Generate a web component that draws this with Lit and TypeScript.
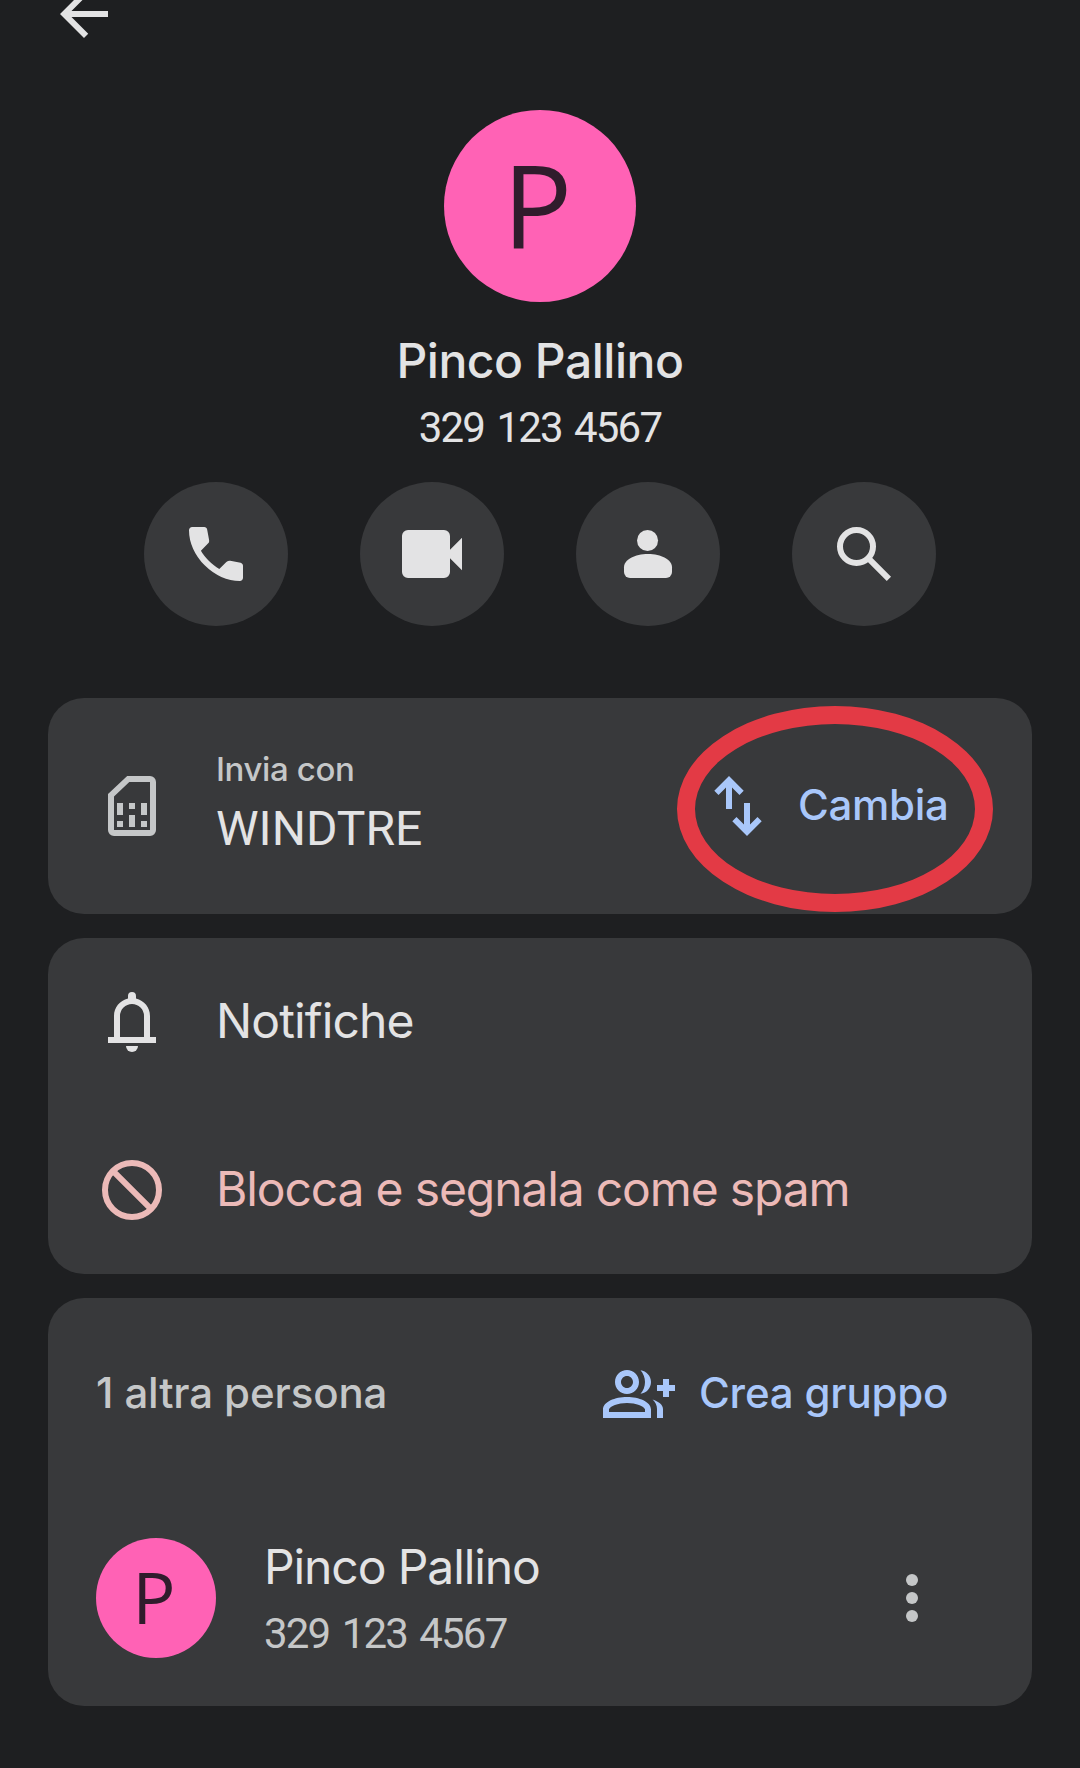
import { LitElement, html, css, svg } from "lit";
import { customElement, property } from "lit/decorators.js";

const icons = {
  back: svg`<path d="M20 11H7.83l5.59-5.59L12 4l-8 8 8 8 1.41-1.41L7.83 13H20z"/>`,
  call: svg`<path d="M19.95 21q-3.125 0-6.175-1.362-3.05-1.363-5.55-3.863-2.5-2.5-3.863-5.55Q3 7.175 3 4.05q0-.45.3-.75t.75-.3H8.1q.35 0 .625.237.275.238.325.563l.65 3.5q.05.4-.025.675-.075.275-.275.475L6.975 10.9q.5.925 1.187 1.787.688.863 1.513 1.663.775.775 1.625 1.438.85.662 1.8 1.212l2.35-2.35q.225-.225.588-.338.362-.112.712-.062l3.45.7q.35.1.575.363.225.262.225.587v4.05q0 .45-.3.75t-.75.3z"/>`,
  video: svg`<path d="M4 4h12a2 2 0 0 1 2 2v4.6l4-4v10.8l-4-4V18a2 2 0 0 1-2 2H4a2 2 0 0 1-2-2V6a2 2 0 0 1 2-2z"/>`,
  person: svg`<circle cx="11.85" cy="7.5" r="3.5"/><path d="M4 16.4C4 13.9 7.6 12 12 12s8 1.9 8 4.4V18a2 2 0 0 1-2 2H6a2 2 0 0 1-2-2z"/>`,
  search: svg`<path fill="none" stroke="currentColor" stroke-width="2" d="M15 9.5a5.5 5.5 0 1 1-11 0 5.5 5.5 0 0 1 11 0zM13.4 13.4l6.9 6.9"/>`,
  sim: svg`<path fill-rule="evenodd" d="M10.4 2H18a2 2 0 0 1 2 2v16a2 2 0 0 1-2 2H6a2 2 0 0 1-2-2V8zM11.1 4 6 8.8V20h12V4z"/><path d="M7 11h2v4H7zM7 17h2v2H7zM11 11h2v2h-2zM11 15h2v4h-2zM15 11h2v4h-2zM15 17h2v2h-2z"/>`,
  swap: svg`<path d="m9 2 4.9 4.9-1.4 1.4L10 5.8V13H8V5.8L5.5 8.3 4.1 6.9zM15 22l-4.9-4.9 1.4-1.4 2.5 2.5V11h2v7.2l2.5-2.5 1.4 1.4z"/>`,
  bell: svg`<path fill-rule="evenodd" d="M4 19v-2h2v-7c0-2.8 1.9-5.1 4.67-5.8v-.87a1.33 1.33 0 0 1 2.66 0v.87C16.1 4.9 18 7.2 18 10v7h2v2zM8 17h8v-7a4 4 0 0 0-8 0z"/><path d="M10 20h4a2 2 0 0 1-4 0z"/>`,
  block: svg`<path fill="none" stroke="currentColor" stroke-width="2" d="M21 12a9 9 0 1 1-18 0 9 9 0 0 1 18 0zM5.7 5.7l12.6 12.6"/>`,
  groupAdd: svg`<path d="M22 9V7h-2v2h-2v2h2v2h2v-2h2V9zM8 12c2.21 0 4-1.79 4-4s-1.79-4-4-4-4 1.79-4 4 1.79 4 4 4zm0-6c1.1 0 2 .9 2 2s-.9 2-2 2-2-.9-2-2 .9-2 2-2zM8 13c-4 0-8 1.6-8 4.2V20h16v-2.8C16 14.6 12 13 8 13zm6 5H2v-.9C2.3 16.1 5 15 8 15s5.7 1.1 6 2.1zM12.51 4.05C13.43 5.11 14 6.49 14 8s-.57 2.89-1.49 3.95C14.47 11.7 16 10.04 16 8s-1.53-3.7-3.49-3.95zM16.53 13.83C17.42 14.66 18 15.7 18 17v3h2v-3c0-1.45-1.59-2.51-3.47-3.17z"/>`,
  more: svg`<circle cx="12" cy="6" r="2"/><circle cx="12" cy="12" r="2"/><circle cx="12" cy="18" r="2"/>`,
};

@customElement("ui-icon")
class UiIcon extends LitElement {
  static styles = css`
    :host { display: block; flex: none; width: 72px; height: 72px; }
    svg { display: block; width: 72px; height: 72px; fill: currentColor; }
  `;
  @property() name: keyof typeof icons = "back";
  render() {
    return html`<svg viewBox="0 0 24 24" aria-hidden="true">${icons[this.name]}</svg>`;
  }
}

@customElement("app-root")
class AppRoot extends LitElement {
  static styles = css`
    :host {
      display: block;
      height: 1768px;
      overflow: hidden;
      background: #1e1f21;
      color: #e3e3e4;
      font-family: Inter, "Liberation Sans", sans-serif;
      white-space: nowrap;
    }
    * { box-sizing: border-box; }
    .toolbar { display: flex; align-items: flex-start; height: 110px; padding-left: 48px; }
    .back { margin-top: -22px; }
    .profile { display: flex; flex-direction: column; align-items: center; height: 372px; }
    .avatar {
      display: flex; align-items: center; justify-content: center; flex: none;
      border-radius: 50%; background: #ff62b5; color: #301c2c;
      font-family: "Open Sans", sans-serif; line-height: 1;
    }
    .avatar.large { width: 192px; height: 192px; font-size: 116px; padding: 0 5px 6px 0; }
    .avatar.small { width: 120px; height: 120px; font-size: 72px; padding: 0 4px 4px 0; }
    .name { margin-top: 29px; font-size: 48px; line-height: 60px; font-weight: 500; letter-spacing: -0.48px; }
    .phone {
      font-family: Roboto, sans-serif; font-size: 42px; line-height: 50px;
      letter-spacing: -1.8px; word-spacing: 3.6px;
    }
    .profile .phone { margin-top: 12px; }
    .actions { display: flex; justify-content: center; gap: 72px; height: 216px; }
    .round {
      display: flex; align-items: center; justify-content: center;
      width: 144px; height: 144px; border-radius: 50%; background: #38393b;
    }
    .cards { display: flex; flex-direction: column; gap: 24px; padding: 0 48px; }
    .card { position: relative; border-radius: 36px; background: #38393b; }
    .row { display: flex; align-items: center; gap: 48px; padding-left: 48px; }
    .sim { height: 216px; padding-right: 84px; color: #c5c7c8; }
    .send { display: flex; flex-direction: column; padding-bottom: 2px; }
    .caption { font-size: 33px; line-height: 48px; font-weight: 500; letter-spacing: -0.39px; }
    .carrier { font-family: Roboto, sans-serif; font-size: 48px; line-height: 72px; color: #e3e3e4; }
    .action {
      display: flex; align-items: center; gap: 24px; margin-left: auto;
      color: #a9c7fa; font-size: 42px; font-weight: 500; line-height: 52px;
    }
    .action.change { width: 246px; letter-spacing: -0.3px; }
    .action.group { width: 345px; letter-spacing: -0.18px; }
    .action span, .count, .label { padding-bottom: 3px; }
    .ring {
      position: absolute; left: 629px; top: 8px; width: 316px; height: 206px;
      border: 18px solid #e33a45; border-radius: 50%;
    }
    .item { height: 168px; font-size: 48px; line-height: 60px; }
    .notify .label { letter-spacing: -0.88px; }
    .block { color: #ecbab8; }
    .block .label { letter-spacing: -1.14px; }
    .people { height: 408px; }
    .head { display: flex; align-items: center; height: 192px; padding: 0 84px 0 48px; }
    .count { color: #c5c7c8; font-size: 42px; line-height: 52px; font-weight: 500; letter-spacing: -0.12px; }
    .member { gap: 48px; height: 216px; padding-right: 84px; }
    .who { display: flex; flex-direction: column; gap: 12px; padding-bottom: 1px; }
    .who .title { font-size: 48px; line-height: 60px; letter-spacing: -1.1px; }
    .who .phone { color: #c5c7c8; }
    .more { margin-left: auto; color: #c5c7c8; }
  `;

  render() {
    const actions = ["call", "video", "person", "search"];
    return html`
      <header class="toolbar"><ui-icon class="back" name="back"></ui-icon></header>
      <section class="profile">
        <div class="avatar large">P</div>
        <div class="name">Pinco Pallino</div>
        <div class="phone">329 123 4567</div>
      </section>
      <nav class="actions">
        ${actions.map((name) => html`<div class="round"><ui-icon name=${name}></ui-icon></div>`)}
      </nav>
      <main class="cards">
        <section class="card row sim">
          <ui-icon name="sim"></ui-icon>
          <div class="send">
            <span class="caption">Invia con</span>
            <span class="carrier">WINDTRE</span>
          </div>
          <div class="action change"><ui-icon name="swap"></ui-icon><span>Cambia</span></div>
          <div class="ring"></div>
        </section>
        <section class="card">
          <div class="row item notify"><ui-icon name="bell"></ui-icon><span class="label">Notifiche</span></div>
          <div class="row item block"><ui-icon name="block"></ui-icon><span class="label">Blocca e segnala come spam</span></div>
        </section>
        <section class="card people">
          <div class="head">
            <span class="count">1 altra persona</span>
            <div class="action group"><ui-icon name="groupAdd"></ui-icon><span>Crea gruppo</span></div>
          </div>
          <div class="row member">
            <div class="avatar small">P</div>
            <div class="who">
              <span class="title">Pinco Pallino</span>
              <span class="phone">329 123 4567</span>
            </div>
            <ui-icon class="more" name="more"></ui-icon>
          </div>
        </section>
      </main>
    `;
  }
}
